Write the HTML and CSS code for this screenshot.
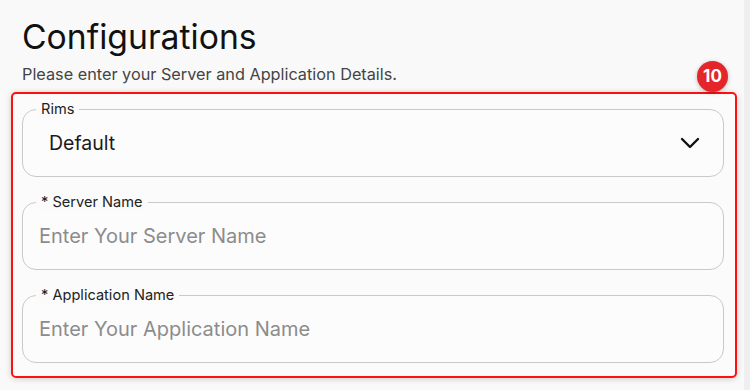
FILE: index.html
```html
<!DOCTYPE html>
<html lang="en">
<head>
  <meta charset="UTF-8">
  <title>Configurations</title>
  <link rel="stylesheet" href="styles.css">
</head>
<body>
  <div class="page">
    <h1>Configurations</h1>
    <p class="subtitle">Please enter your Server and Application Details.</p>

    <div class="panel">
      <span class="badge">10</span>

      <!-- Select -->
      <div class="field field-select">
        <span class="field-label">Rims</span>
        <span class="value">Default</span>
        <svg class="chevron" width="20" height="12" viewBox="0 0 20 12">
          <path d="M2 2 L10 10 L18 2" fill="none" stroke="#111" stroke-width="2.4" stroke-linecap="round" stroke-linejoin="round"/>
        </svg>
      </div>

      <!-- Inputs -->
      <div class="field">
        <span class="field-label">* Server Name</span>
        <input type="text" placeholder="Enter Your Server Name">
      </div>
      <div class="field">
        <span class="field-label">* Application Name</span>
        <input type="text" placeholder="Enter Your Application Name">
      </div>
    </div>
  </div>
</body>
</html>
```

FILE: styles.css
```css
body {
  margin: 0;
  background-color: #efefef;
  font-family: Inter, "Liberation Sans", sans-serif;
}

.page {
  width: 744px;
  height: 390px;
  box-sizing: border-box;
  background-color: #f9f9f9;
  padding: 17px 0 0 22px;
}

h1 {
  margin: 0;
  font-size: 33.7px;
  font-weight: 400;
  line-height: 40px;
  color: #111;
}

.subtitle {
  margin: 7px 0 0;
  font-size: 16.25px;
  line-height: 20px;
  color: #444;
}

.panel {
  position: relative;
  margin: 8px 0 0 -11px;
  width: 726px;
  box-sizing: border-box;
  border: 2px solid #ff1010;
  border-radius: 5px;
  background-color: #fbfbfb;
  box-shadow: 0 1px 6px rgba(0, 0, 0, 0.18);
  padding: 15px 11px 13px 9px;
  display: flex;
  flex-direction: column;
  gap: 25px;
}

.badge {
  position: absolute;
  top: -33px;
  right: 7px;
  width: 31px;
  height: 31px;
  border-radius: 50%;
  background-color: #e4262b;
  box-shadow: 0 1px 4px rgba(0, 0, 0, 0.25);
  color: #fff;
  font-size: 17px;
  font-weight: 700;
  line-height: 31px;
  text-align: center;
}

.field {
  position: relative;
  height: 68px;
  box-sizing: border-box;
  border: 1px solid #c9c9c9;
  border-radius: 14px;
  background-color: #fcfcfc;
  display: flex;
  align-items: center;
  padding: 0 16px;
}

.field-label {
  position: absolute;
  top: -10px;
  left: 13px;
  padding: 0 5px;
  background-color: #fbfbfb;
  font-size: 14.6px;
  line-height: 18px;
  color: #222;
}

.field-select {
  justify-content: space-between;
  padding: 0 23px 0 26px;
}

.value {
  font-size: 19.5px;
  color: #1a1a1a;
}

.field input {
  border: none;
  outline: none;
  background: transparent;
  width: 100%;
  padding: 0;
  font-family: inherit;
  font-size: 20px;
  color: #1a1a1a;
}

.field input::placeholder {
  color: #8c8c8c;
}
```
